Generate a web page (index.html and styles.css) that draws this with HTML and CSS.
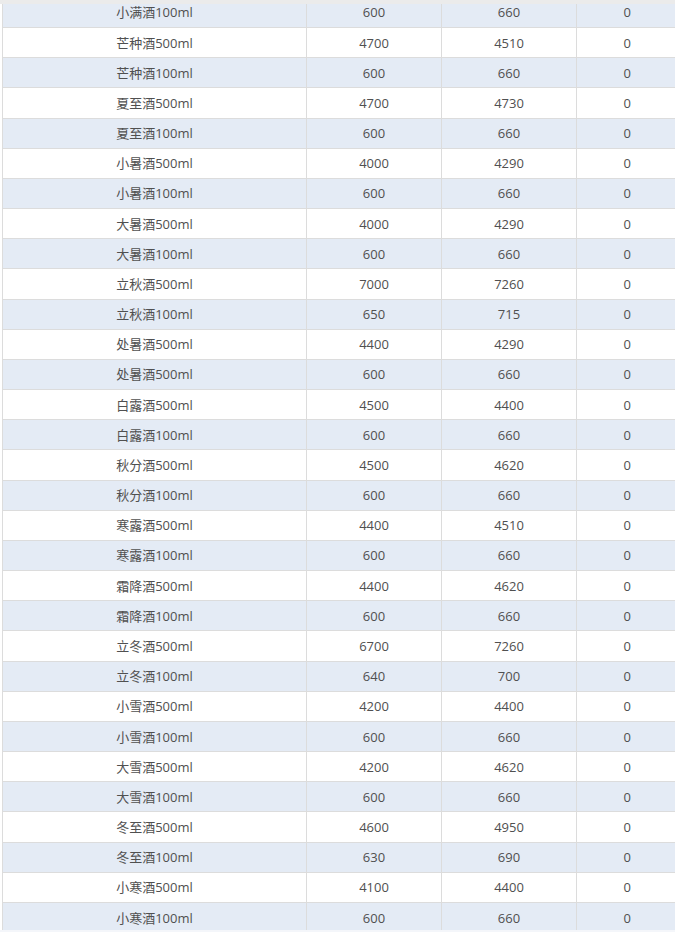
FILE: index.html
```html
<!DOCTYPE html>
<html lang="zh-CN">
<head>
<meta charset="utf-8">
<title>酒品价格表</title>
<link rel="stylesheet" href="styles.css">
</head>
<body>
<div class="page">
  <div class="topbar"></div>
  <div class="scroller">
    <table class="grid">
      <colgroup>
        <col class="c1"><col class="c2"><col class="c3"><col class="c4">
      </colgroup>
      <tbody>
        <tr><td>小满酒100ml</td><td>600</td><td>660</td><td>0</td></tr>
        <tr><td>芒种酒500ml</td><td>4700</td><td>4510</td><td>0</td></tr>
        <tr><td>芒种酒100ml</td><td>600</td><td>660</td><td>0</td></tr>
        <tr><td>夏至酒500ml</td><td>4700</td><td>4730</td><td>0</td></tr>
        <tr><td>夏至酒100ml</td><td>600</td><td>660</td><td>0</td></tr>
        <tr><td>小暑酒500ml</td><td>4000</td><td>4290</td><td>0</td></tr>
        <tr><td>小暑酒100ml</td><td>600</td><td>660</td><td>0</td></tr>
        <tr><td>大暑酒500ml</td><td>4000</td><td>4290</td><td>0</td></tr>
        <tr><td>大暑酒100ml</td><td>600</td><td>660</td><td>0</td></tr>
        <tr><td>立秋酒500ml</td><td>7000</td><td>7260</td><td>0</td></tr>
        <tr><td>立秋酒100ml</td><td>650</td><td>715</td><td>0</td></tr>
        <tr><td>处暑酒500ml</td><td>4400</td><td>4290</td><td>0</td></tr>
        <tr><td>处暑酒500ml</td><td>600</td><td>660</td><td>0</td></tr>
        <tr><td>白露酒500ml</td><td>4500</td><td>4400</td><td>0</td></tr>
        <tr><td>白露酒100ml</td><td>600</td><td>660</td><td>0</td></tr>
        <tr><td>秋分酒500ml</td><td>4500</td><td>4620</td><td>0</td></tr>
        <tr><td>秋分酒100ml</td><td>600</td><td>660</td><td>0</td></tr>
        <tr><td>寒露酒500ml</td><td>4400</td><td>4510</td><td>0</td></tr>
        <tr><td>寒露酒100ml</td><td>600</td><td>660</td><td>0</td></tr>
        <tr><td>霜降酒500ml</td><td>4400</td><td>4620</td><td>0</td></tr>
        <tr><td>霜降酒100ml</td><td>600</td><td>660</td><td>0</td></tr>
        <tr><td>立冬酒500ml</td><td>6700</td><td>7260</td><td>0</td></tr>
        <tr><td>立冬酒100ml</td><td>640</td><td>700</td><td>0</td></tr>
        <tr><td>小雪酒500ml</td><td>4200</td><td>4400</td><td>0</td></tr>
        <tr><td>小雪酒100ml</td><td>600</td><td>660</td><td>0</td></tr>
        <tr><td>大雪酒500ml</td><td>4200</td><td>4620</td><td>0</td></tr>
        <tr><td>大雪酒100ml</td><td>600</td><td>660</td><td>0</td></tr>
        <tr><td>冬至酒500ml</td><td>4600</td><td>4950</td><td>0</td></tr>
        <tr><td>冬至酒100ml</td><td>630</td><td>690</td><td>0</td></tr>
        <tr><td>小寒酒500ml</td><td>4100</td><td>4400</td><td>0</td></tr>
        <tr><td>小寒酒100ml</td><td>600</td><td>660</td><td>0</td></tr>
      </tbody>
    </table>
  </div>
  <div class="bottombar"></div>
</div>
</body>
</html>
```

FILE: styles.css
```css
html, body {
  margin: 0;
  padding: 0;
  background: #ffffff;
  overflow: hidden;
}

.page {
  width: 675px;
  height: 932px;
  display: flex;
  flex-direction: column;
  overflow: hidden;
}

.topbar {
  height: 4px;
  flex: none;
  background: #ebebeb;
}

.scroller {
  flex: 1;
  min-height: 0;
  overflow: hidden;
  padding-left: 2px;
}

.bottombar {
  height: 2px;
  flex: none;
  background: #f4f6fa;
}

.grid {
  width: 675px;
  margin-top: -6.7px;
  border-collapse: collapse;
  table-layout: fixed;
  border-left: 1px solid #dcdcdc;
  font-family: "Open Sans", "Noto Sans CJK SC", sans-serif;
  font-size: 13px;
  color: #505050;
}

.c1 { width: 304px; }
.c2 { width: 135px; }
.c3 { width: 135px; }
.c4 { width: 101px; }

.grid td {
  height: 30.18px;
  padding: 0;
  box-sizing: border-box;
  text-align: center;
  vertical-align: middle;
  border-bottom: 1px solid #dcdcdc;
  border-right: 1px solid #dcdcdc;
  line-height: 16px;
}

.grid td:last-child {
  border-right: none;
}

.grid tr:nth-child(odd) td {
  background: #e4ebf5;
}

.grid tr:nth-child(even) td {
  background: #ffffff;
}
```
